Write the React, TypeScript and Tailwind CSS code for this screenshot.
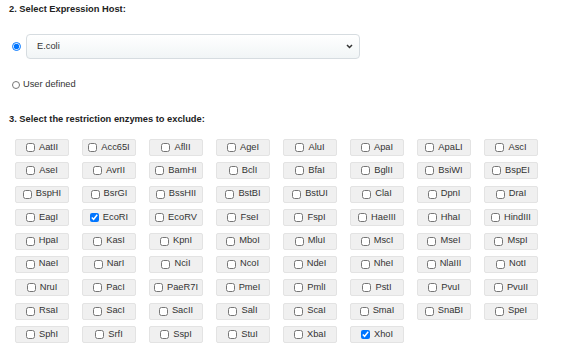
const enzymes = [
  "AatII", "Acc65I", "AflII", "AgeI", "AluI", "ApaI", "ApaLI", "AscI",
  "AseI", "AvrII", "BamHI", "BclI", "BfaI", "BglII", "BsiWI", "BspEI",
  "BspHI", "BsrGI", "BssHII", "BstBI", "BstUI", "ClaI", "DpnI", "DraI",
  "EagI", "EcoRI", "EcoRV", "FseI", "FspI", "HaeIII", "HhaI", "HindIII",
  "HpaI", "KasI", "KpnI", "MboI", "MluI", "MscI", "MseI", "MspI",
  "NaeI", "NarI", "NciI", "NcoI", "NdeI", "NheI", "NlaIII", "NotI",
  "NruI", "PacI", "PaeR7I", "PmeI", "PmlI", "PstI", "PvuI", "PvuII",
  "RsaI", "SacI", "SacII", "SalI", "ScaI", "SmaI", "SnaBI", "SpeI",
  "SphI", "SrfI", "SspI", "StuI", "XbaI", "XhoI",
];

const checked = ["EcoRI", "XhoI"];

const App = () => {
  return (
    <div className="pl-[9px] pt-[3px] font-['Liberation_Sans',Arial,sans-serif] text-[#333] bg-white w-[567px] h-[347px]">
      <h2 className="text-[9.3px] font-bold leading-[12px] text-[#222]">
        2. Select Expression Host:
      </h2>

      <div className="mt-[19px] flex items-center">
        <input
          type="radio"
          name="host"
          defaultChecked
          className="ml-[3px] m-0 w-[9px] h-[9px]"
        />
        <div className="ml-[5px] w-[334px] h-[25px] rounded-[4px] border border-[#d6dce0] bg-gradient-to-b from-white to-[#f1f5f6] flex items-center justify-between pl-[10px] pr-[6px] text-[9.3px] text-[#333]">
          <span>E.coli</span>
          <svg width="7" height="5" viewBox="0 0 7 5">
            <path d="M1 1 L3.5 3.5 L6 1" fill="none" stroke="#333" strokeWidth="1.5" />
          </svg>
        </div>
      </div>

      <div className="mt-[20px] h-[12px] flex items-center">
        <input type="radio" name="host" className="ml-[3px] m-0 w-[8px] h-[8px]" />
        <span className="ml-[3px] text-[9.3px] text-[#333]">User defined</span>
      </div>

      <h2 className="mt-[22px] text-[9.3px] font-bold leading-[12px] text-[#222]">
        3. Select the restriction enzymes to exclude:
      </h2>

      <div className="mt-[14px] ml-[6px] grid grid-cols-[repeat(8,54px)] gap-x-[13px] gap-y-[6.4px]">
        {enzymes.map((name) => (
          <label
            key={name}
            className="h-[17px] flex items-center justify-center gap-[4px] rounded-[2px] border border-[#e3e3e3] bg-[#f0f0f0] text-[9.3px] text-[#333]"
          >
            <input
              type="checkbox"
              defaultChecked={checked.includes(name)}
              className="m-0 w-[9px] h-[9px]"
            />
            <span>{name}</span>
          </label>
        ))}
      </div>
    </div>
  );
};

export default App;
